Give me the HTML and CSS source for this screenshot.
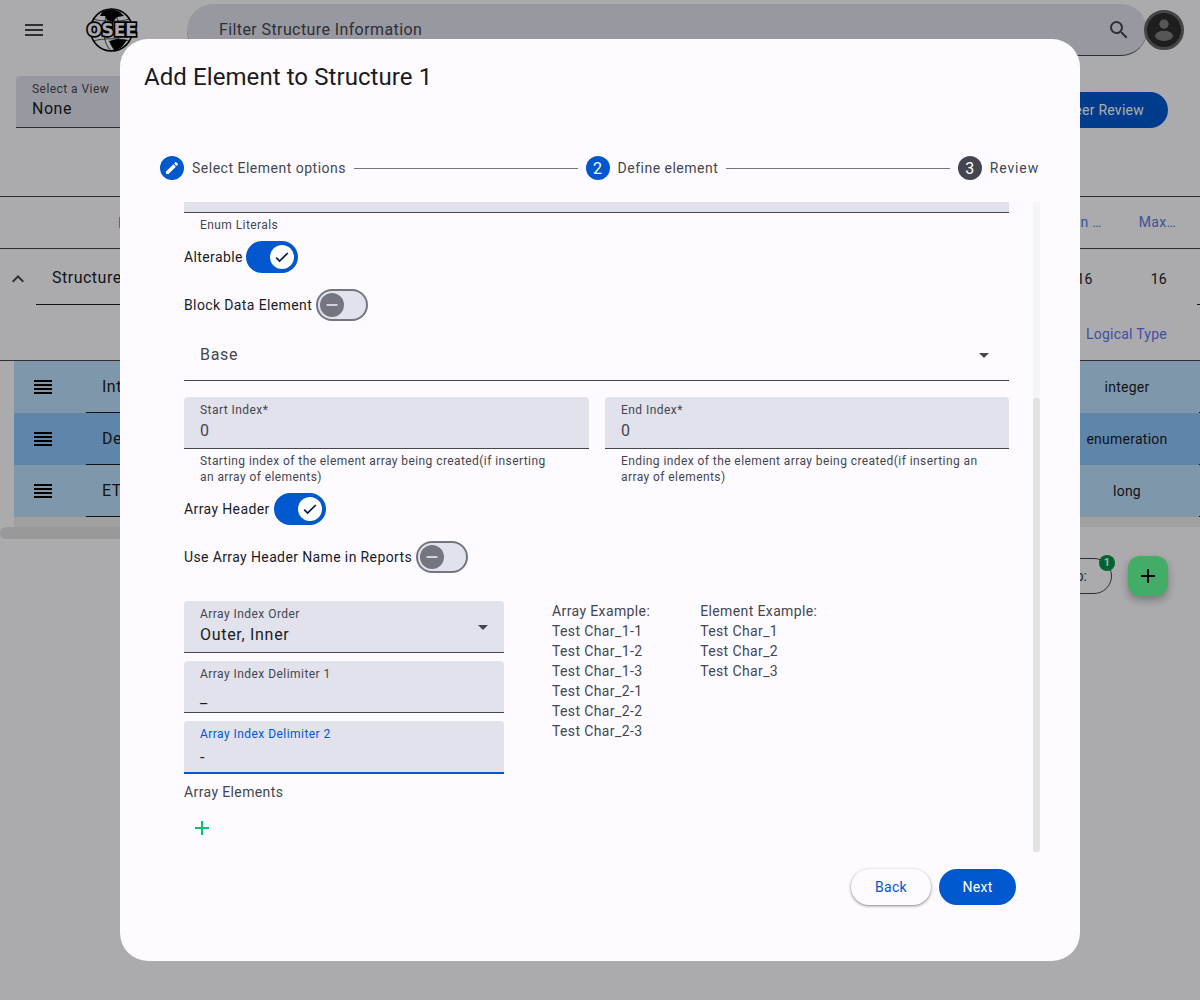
FILE: index.html
```html
<!DOCTYPE html>
<html lang="en">
<head>
<meta charset="utf-8">
<title>Add Element to Structure</title>
<link rel="stylesheet" href="styles.css">
</head>
<body>
<div class="page">
  <header class="topbar">
    <svg class="menu-icon" viewBox="0 0 24 24"><path d="M3 18h18v-2H3v2zm0-5h18v-2H3v2zm0-7v2h18V6H3z"/></svg>
    <svg class="logo" viewBox="0 0 54 44">
      <circle class="globe" cx="26.5" cy="22" r="21"/>
      <path class="globe-grid" d="M26.5 1c-9 6-11 34 0 42M26.5 1c9 6 11 34 0 42M8 11c10 3 27 3 37 0M8 33c10-3 27-3 37 0"/>
      <path d="M17 4c5-3 13-3 18 0l4 4-7 1-4 5-6-2-2-4-5 0z"/>
      <path d="M24 33l8-2 10 1-5 7-7 4-3-4z"/>
      <text x="27" y="28" class="logo-text" text-anchor="middle" textLength="50" lengthAdjust="spacingAndGlyphs">OSEE</text>
    </svg>
    <div class="search">
      <span class="search-label">Filter Structure Information</span>
      <svg class="search-icon" viewBox="0 0 24 24"><path d="M15.5 14h-.79l-.28-.27A6.47 6.47 0 0 0 16 9.5 6.5 6.5 0 1 0 9.5 16c1.61 0 3.09-.59 4.23-1.57l.27.28v.79l5 4.99L20.49 19l-4.99-5zm-6 0C7.01 14 5 11.99 5 9.5S7.01 5 9.5 5 14 7.01 14 9.5 11.99 14 9.5 14z"/></svg>
    </div>
    <div class="avatar">
      <svg viewBox="0 0 40 40"><circle cx="20" cy="13" r="5.5"/><ellipse cx="20" cy="27" rx="10.5" ry="6"/></svg>
    </div>
  </header>

  <section class="view-row">
    <div class="view-select">
      <span class="view-label">Select a View</span>
      <span class="view-value">None</span>
    </div>
    <button class="peer-button">Create Peer Review</button>
  </section>

  <section class="table">
    <div class="thead">
      <span class="th th-first">Name</span>
      <span class="th th-min">Min …</span>
      <span class="th th-max">Max…</span>
    </div>
    <div class="struct-row">
      <svg class="chevron" viewBox="0 0 24 24"><path d="M12 8l-6 6 1.41 1.41L12 10.83l4.59 4.58L18 14z"/></svg>
      <span class="struct-name">Structure 1</span>
      <span class="num num-min">16</span>
      <span class="num num-max">16</span>
      <span class="row-end row-end-wide"></span>
    </div>
    <div class="sub-head"><span class="logical-head">Logical Type</span></div>
    <div class="sub-row">
      <span class="handle"></span><span class="sub-name">Integer</span><span class="logical">integer</span><span class="row-end"></span>
    </div>
    <div class="sub-row sub-row-hi">
      <span class="handle"></span><span class="sub-name">Desc</span><span class="logical">enumeration</span><span class="row-end"></span>
    </div>
    <div class="sub-row">
      <span class="handle"></span><span class="sub-name">ETH</span><span class="logical">long</span><span class="row-end"></span>
    </div>
    <div class="sub-scroll"></div>
    <div class="h-scroll"></div>
  </section>

  <div class="actions">
    <span class="chip">Group:<span class="badge">1</span></span>
    <span class="fab"><svg viewBox="0 0 24 24"><path d="M19 13h-6v6h-2v-6H5v-2h6V5h2v6h6v2z"/></svg></span>
  </div>
</div>

<div class="backdrop"></div>

<div class="dialog">
  <h2 class="dialog-title">Add Element to Structure 1</h2>

  <div class="stepper">
    <div class="step">
      <span class="step-dot step-dot-on"><svg viewBox="0 0 24 24"><path d="M3 17.25V21h3.75L17.81 9.94l-3.75-3.75L3 17.25zM20.71 7.04c.39-.39.39-1.02 0-1.41l-2.34-2.34c-.39-.39-1.02-.39-1.41 0l-1.83 1.83 3.75 3.75 1.83-1.83z"/></svg></span>
      <span class="step-label">Select Element options</span>
    </div>
    <span class="step-line"></span>
    <div class="step">
      <span class="step-dot step-dot-on">2</span>
      <span class="step-label">Define element</span>
    </div>
    <span class="step-line"></span>
    <div class="step">
      <span class="step-dot">3</span>
      <span class="step-label step-label-wide">Review</span>
    </div>
  </div>

  <div class="scroller">
    <div class="form">
      <div class="stub-field"></div>
      <div class="hint">Enum Literals</div>

      <div class="toggle-row toggle-row-first">
        <span>Alterable</span>
        <span class="switch switch-on"><span class="knob"><svg viewBox="0 0 16 16"><path d="M2.2 8.6l3.4 3.4L13.8 4"/></svg></span></span>
      </div>
      <div class="toggle-row">
        <span>Block Data Element</span>
        <span class="switch"><span class="knob"><svg viewBox="0 0 16 16"><path d="M2.5 8h11"/></svg></span></span>
      </div>

      <div class="field field-plain">
        <span class="value value-muted">Base</span>
        <span class="caret"></span>
      </div>

      <div class="two-col">
        <div>
          <div class="field">
            <span class="label">Start Index*</span>
            <span class="value value-muted">0</span>
          </div>
          <div class="hint">Starting index of the element array being created(if inserting an array of elements)</div>
        </div>
        <div>
          <div class="field">
            <span class="label">End Index*</span>
            <span class="value value-muted">0</span>
          </div>
          <div class="hint">Ending index of the element array being created(if inserting an array of elements)</div>
        </div>
      </div>

      <div class="toggle-row toggle-row-array">
        <span>Array Header</span>
        <span class="switch switch-on"><span class="knob"><svg viewBox="0 0 16 16"><path d="M2.2 8.6l3.4 3.4L13.8 4"/></svg></span></span>
      </div>
      <div class="toggle-row">
        <span>Use Array Header Name in Reports</span>
        <span class="switch"><span class="knob"><svg viewBox="0 0 16 16"><path d="M2.5 8h11"/></svg></span></span>
      </div>

      <div class="array-grid">
        <div class="array-fields">
          <div class="field">
            <span class="label">Array Index Order</span>
            <span class="value">Outer, Inner</span>
            <span class="caret"></span>
          </div>
          <div class="field">
            <span class="label">Array Index Delimiter 1</span>
            <span class="value value-input">_</span>
          </div>
          <div class="field field-focus">
            <span class="label">Array Index Delimiter 2</span>
            <span class="value value-input">-</span>
          </div>
        </div>
        <div class="example">
          <div>Array Example:</div>
          <div>Test Char_1-1</div>
          <div>Test Char_1-2</div>
          <div>Test Char_1-3</div>
          <div>Test Char_2-1</div>
          <div>Test Char_2-2</div>
          <div>Test Char_2-3</div>
        </div>
        <div class="example example-second">
          <div>Element Example:</div>
          <div>Test Char_1</div>
          <div>Test Char_2</div>
          <div>Test Char_3</div>
        </div>
      </div>

      <div class="array-elements">Array Elements</div>
      <svg class="add-icon" viewBox="0 0 24 24"><path d="M19 13h-6v6h-2v-6H5v-2h6V5h2v6h6v2z"/></svg>
    </div>
    <div class="scrollbar"><span class="thumb"></span></div>
  </div>

  <div class="dialog-actions">
    <button class="btn btn-back">Back</button>
    <button class="btn btn-next">Next</button>
  </div>
</div>
</body>
</html>
```
FILE: styles.css
```css
* { box-sizing: border-box; }
html, body { margin: 0; padding: 0; }
body {
  width: 1200px;
  height: 1000px;
  overflow: hidden;
  background: #fdfbff;
  font-family: Roboto, "Liberation Sans", sans-serif;
  color: #1a1b1f;
  position: relative;
}
.page { height: 1000px; }

/* top bar */
.topbar {
  display: flex;
  align-items: center;
  height: 60px;
  padding: 4px 16px 4px 22px;
}
.menu-icon { width: 24px; height: 24px; fill: #44464f; flex: none; }
.logo { width: 54px; height: 44px; margin-left: 39px; flex: none; fill: #000; }
.globe { fill: none; stroke: #000; stroke-width: 1.6; }
.globe-grid { fill: none; stroke: #000; stroke-width: .7; }
.logo-text {
  font: 700 17px "DejaVu Sans", sans-serif;
  fill: #fdfbff;
  stroke: #000;
  stroke-width: 3.4px;
  paint-order: stroke;
}
.search {
  width: 960px;
  height: 52px;
  margin-left: 48px;
  flex: none;
  display: flex;
  align-items: center;
  justify-content: space-between;
  padding: 0 16px 0 32px;
  background: #e1e2ec;
  border-radius: 26px;
  border-bottom: 1px solid #44464f;
}
.search-label { font-size: 16px; letter-spacing: .4px; color: #44464f; }
.search-icon { width: 24px; height: 24px; fill: #44464f; }
.avatar {
  width: 40px;
  height: 40px;
  margin-left: -3px;
  border-radius: 50%;
  background: #2d2d2e;
  border: 3px solid #666;
  flex: none;
  overflow: hidden;
}
.avatar svg { display: block; width: 34px; height: 34px; fill: #7f7f7f; }

/* view row */
.view-row {
  display: flex;
  justify-content: space-between;
  align-items: flex-end;
  padding: 16px 32px 0 16px;
}
.view-select {
  width: 320px;
  height: 52px;
  padding: 5px 16px 0;
  background: #e1e2ec;
  border-radius: 4px 4px 0 0;
  border-bottom: 1px solid #44464f;
  display: flex;
  flex-direction: column;
}
.view-label { font-size: 12px; line-height: 16px; letter-spacing: .45px; color: #44464f; }
.view-value { font-size: 16px; line-height: 24px; letter-spacing: .5px; }
.peer-button {
  height: 36px;
  padding: 0 24px;
  border: 0;
  border-radius: 18px;
  background: #0057ce;
  color: #fff;
  font: 400 14px Roboto, sans-serif;
  letter-spacing: .25px;
}

/* table */
.table { margin-top: 68px; }
.thead {
  height: 53px;
  border-top: 1px solid #44464f;
  border-bottom: 1px solid #44464f;
  display: flex;
  align-items: center;
  font-size: 14px;
  letter-spacing: .25px;
}
.th { color: #5a78e0; }
.th-first { margin-left: 118px; }
.th-min { margin-left: auto; padding-bottom: 2px; }
.th-max { margin-left: 37px; margin-right: 24px; padding-bottom: 2px; }
.struct-row {
  height: 56px;
  display: flex;
  align-items: center;
  font-size: 14px;
  letter-spacing: .25px;
}
.chevron { width: 24px; height: 24px; margin-left: 6px; fill: #44464f; flex: none; margin-top: 3px; }
.struct-name {
  margin-left: 6px;
  width: 200px;
  height: 56px;
  line-height: 58px;
  padding-left: 16px;
  font-size: 16px;
  letter-spacing: .5px;
  border-bottom: 1px solid #1a1b1f;
}
.num { margin-top: 4px; }
.num-min { margin-left: auto; }
.num-max { margin-left: 58px; margin-right: 30px; }
.row-end { align-self: stretch; width: 1px; flex: none; border-bottom: 1px solid #1a1b1f; }
.row-end-wide { width: 3px; }
.sub-head {
  height: 56px;
  display: flex;
  justify-content: flex-end;
  align-items: center;
  padding-right: 33px;
  border-bottom: 1px solid #44464f;
  font-size: 14px;
  letter-spacing: .25px;
}
.logical-head { color: #6373f5; padding-top: 2px; }
.sub-row {
  height: 52px;
  margin-left: 14px;
  display: flex;
  align-items: center;
  background: #bcdffb;
  font-size: 14px;
  letter-spacing: .25px;
}
.sub-row-hi { background: #8cc5fb; }
.handle {
  width: 18px;
  height: 14px;
  margin-left: 20px;
  flex: none;
  background: repeating-linear-gradient(#000 0 2px, transparent 2px 4px);
}
.sub-name {
  align-self: stretch;
  line-height: 51px;
  width: 260px;
  padding-left: 16px;
  margin-left: 34px;
  font-size: 16px;
  letter-spacing: .5px;
  border-bottom: 1px solid #1a1b1f;
}
.logical {
  margin-left: auto;
  width: 118px;
  text-align: center;
  margin-right: 13px;
}
.sub-scroll { height: 10px; margin-left: 14px; background: #ececec; }
.h-scroll { height: 12px; width: 300px; background: #e2e2e2; border-radius: 6px; }

.actions {
  display: flex;
  justify-content: flex-end;
  align-items: center;
  gap: 16px;
  padding: 17px 32px 0 0;
}
.chip {
  position: relative;
  height: 36px;
  line-height: 34px;
  padding: 0 24px 0 14px;
  border: 1px solid #44464f;
  border-radius: 18px;
  font-size: 14px;
  color: #44464f;
}
.badge {
  position: absolute;
  top: -4px;
  right: -4px;
  width: 16px;
  height: 16px;
  line-height: 16px;
  border-radius: 50%;
  background: #009349;
  color: #fff;
  font-size: 11px;
  font-weight: 700;
  text-align: center;
}
.fab {
  width: 40px;
  height: 40px;
  border-radius: 12px;
  background: #64ff99;
  box-shadow: 0 4px 8px rgba(0,0,0,.3);
  display: flex;
  align-items: center;
  justify-content: center;
}
.fab svg { width: 24px; height: 24px; fill: #002; }

/* overlay */
.backdrop {
  position: absolute;
  inset: 0;
  background: rgba(0,0,0,.32);
}
.dialog {
  position: absolute;
  left: 120px;
  top: 39px;
  width: 960px;
  height: 922px;
  padding: 22px 0 0;
  background: #fdfbff;
  border-radius: 28px;
}
.dialog-title {
  margin: 0 0 0 24px;
  font-size: 24px;
  font-weight: 400;
  line-height: 32px;
  color: #1a1b1f;
  letter-spacing: .08px;
}

/* stepper */
.stepper {
  display: flex;
  align-items: center;
  margin: 63px 41px 0 40px;
  height: 24px;
}
.step { display: flex; align-items: center; flex: none; }
.step-dot {
  width: 24px;
  height: 24px;
  border-radius: 50%;
  background: #44464f;
  color: #fff;
  display: flex;
  align-items: center;
  justify-content: center;
  font-size: 16px;
}
.step-dot-on { background: #0057ce; }
.step-dot svg { width: 16px; height: 16px; fill: #fff; }
.step-label {
  margin-left: 8px;
  font-size: 14px;
  letter-spacing: .5px;
  color: #44464f;
}
.step-label-wide { letter-spacing: .85px; }
.step-line {
  flex: 1;
  height: 1px;
  margin: 0 8px;
  background: #74767f;
}

/* scrolling content */
.scroller {
  display: flex;
  margin: 22px 40px 0 64px;
  height: 650px;
  overflow: hidden;
}
.form { width: 825px; flex: none; font-size: 14px; letter-spacing: .38px; color: #1a1b1f; }
.scrollbar {
  margin-left: 24px;
  width: 7px;
  height: 650px;
  background: #f5f5f7;
  flex: none;
  padding-top: 196px;
}
.thumb { display: block; height: 454px; background: #e2e2e2; border-radius: 3px; }
.stub-field { height: 11px; background: #e1e2ec; border-bottom: 1px solid #44464f; }
.hint {
  padding: 4px 31px 0 16px;
  font-size: 12px;
  line-height: 16px;
  letter-spacing: .42px;
  color: #44464f;
}
.toggle-row {
  display: flex;
  align-items: center;
  gap: 4px;
  height: 32px;
  margin-top: 16px;
}
.toggle-row-first { margin-top: 8px; gap: 3px; }
.toggle-row-array { margin-top: 8px; }
.switch {
  width: 52px;
  height: 32px;
  border-radius: 16px;
  background: #e1e2ec;
  border: 2px solid #74767f;
  display: flex;
  align-items: center;
  padding-left: 2px;
  flex: none;
}
.switch .knob {
  width: 24px;
  height: 24px;
  border-radius: 50%;
  background: #74767f;
  display: flex;
  align-items: center;
  justify-content: center;
}
.knob svg { width: 16px; height: 16px; fill: none; stroke: #e1e2ec; stroke-width: 1.7; }
.switch-on {
  background: #0057ce;
  border-color: #0057ce;
  padding-left: 22px;
}
.switch-on .knob { background: #fff; }
.switch-on .knob svg { stroke: #001849; }

.field {
  position: relative;
  height: 52px;
  padding: 5px 16px 0;
  background: #e1e2ec;
  border-radius: 4px 4px 0 0;
  border-bottom: 1px solid #44464f;
  display: flex;
  flex-direction: column;
}
.label {
  font-size: 12px;
  line-height: 16px;
  margin-bottom: 1px;
  letter-spacing: .45px;
  color: #44464f;
}
.value {
  font-size: 16px;
  line-height: 24px;
  letter-spacing: .7px;
  color: #1a1b1f;
}
.value-muted { color: #44464f; }
.value-input { padding-top: 3px; }
.field-plain {
  background: transparent;
  margin-top: 8px;
  justify-content: center;
  padding-top: 0;
}
.caret {
  position: absolute;
  right: 16px;
  top: 24px;
  border-left: 5px solid transparent;
  border-right: 5px solid transparent;
  border-top: 5px solid #44464f;
}
.field-plain .caret { right: 20px; }
.field-focus { height: 53px; border-bottom: 2px solid #0057ce; }
.field-focus .label { color: #0057ce; }
.two-col {
  display: grid;
  grid-template-columns: 405px 404px;
  gap: 16px;
  margin-top: 16px;
}
.array-grid {
  display: flex;
  margin-top: 28px;
  font-size: 14px;
}
.array-fields {
  width: 320px;
  display: flex;
  flex-direction: column;
  gap: 8px;
  flex: none;
}
.example { margin-left: 48px; line-height: 20px; color: #44464f; }
.example-second { margin-left: 50px; }
.array-elements { margin-top: 8px; line-height: 20px; color: #44464f; }
.add-icon {
  display: block;
  width: 24px;
  height: 24px;
  margin: 14px 0 0 6px;
  fill: #00c46e;
}
.dialog-actions {
  display: flex;
  justify-content: flex-end;
  gap: 8px;
  margin: 17px 64px 0 0;
}
.btn {
  height: 36px;
  border: 0;
  border-radius: 18px;
  font: 400 14px Roboto, sans-serif;
  letter-spacing: .25px;
}
.btn-back {
  width: 80px;
  background: #fdfbff;
  color: #0057ce;
  box-shadow: 0 1px 3px 1px rgba(0,0,0,.15), 0 1px 2px rgba(0,0,0,.3);
}
.btn-next { width: 77px; background: #0057ce; color: #fff; }
```
